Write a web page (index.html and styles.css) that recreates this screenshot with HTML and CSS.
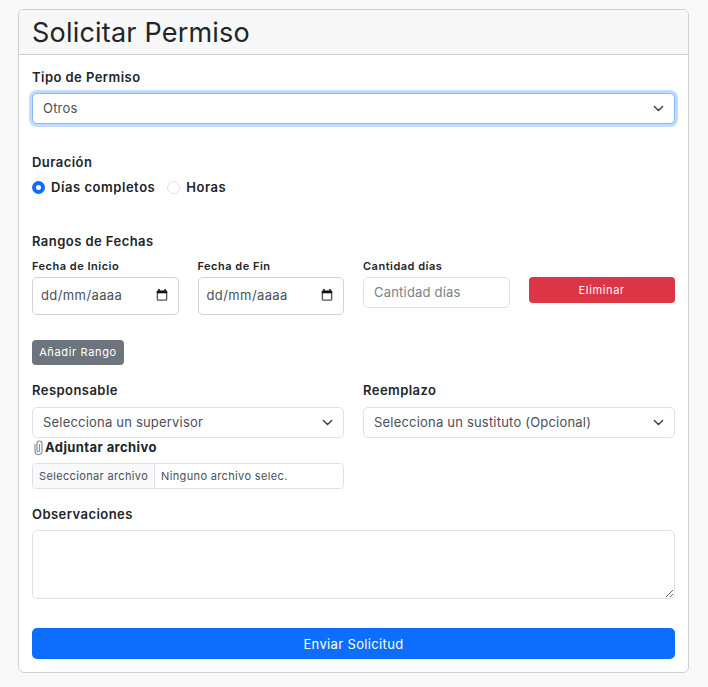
FILE: index.html
```html
<!DOCTYPE html>
<html lang="es">
<head>
    <meta charset="UTF-8">
    <meta name="viewport" content="width=device-width, initial-scale=1.0">
    <title>Solicitar Permiso</title>
    <link rel="stylesheet" href="styles.css">
</head>
<body>
    <div class="card">
        <div class="card-header">
            <h1>Solicitar Permiso</h1>
        </div>
        <form class="card-body">
            <div class="field-tipo">
                <label class="form-label" for="tipo">Tipo de Permiso</label>
                <select class="form-select is-focus" id="tipo">
                    <option>Otros</option>
                </select>
            </div>

            <div class="field-duracion">
                <div class="form-label">Duración</div>
                <div class="radio-row">
                    <label class="radio-item"><input type="radio" name="duracion" checked>Días completos</label>
                    <label class="radio-item"><input type="radio" name="duracion">Horas</label>
                </div>
            </div>

            <div class="field-rangos">
                <div class="form-label">Rangos de Fechas</div>
                <div class="range-row">
                    <div>
                        <div class="small-label">Fecha de Inicio</div>
                        <div class="date-input">
                            <span>dd/mm/aaaa</span>
                            <svg width="12" height="12" viewBox="0 0 14 14"><path d="M3.5 0v3M10.5 0v3" stroke="#111" stroke-width="1.8"/><rect x="1.6" y="2.6" width="10.8" height="10.4" rx="1" fill="none" stroke="#555" stroke-width="1.6"/><rect x="1" y="2" width="12" height="3" fill="#111"/></svg>
                        </div>
                    </div>
                    <div>
                        <div class="small-label">Fecha de Fin</div>
                        <div class="date-input">
                            <span>dd/mm/aaaa</span>
                            <svg width="12" height="12" viewBox="0 0 14 14"><path d="M3.5 0v3M10.5 0v3" stroke="#111" stroke-width="1.8"/><rect x="1.6" y="2.6" width="10.8" height="10.4" rx="1" fill="none" stroke="#555" stroke-width="1.6"/><rect x="1" y="2" width="12" height="3" fill="#111"/></svg>
                        </div>
                    </div>
                    <div>
                        <div class="small-label">Cantidad días</div>
                        <input class="form-control" type="text" placeholder="Cantidad días">
                    </div>
                    <div class="range-action">
                        <button class="btn btn-danger" type="button">Eliminar</button>
                    </div>
                </div>
                <button class="btn btn-secondary" type="button">Añadir Rango</button>
            </div>

            <div class="people-row">
                <div>
                    <label class="form-label" for="responsable">Responsable</label>
                    <select class="form-select" id="responsable">
                        <option>Selecciona un supervisor</option>
                    </select>
                </div>
                <div>
                    <label class="form-label" for="reemplazo">Reemplazo</label>
                    <select class="form-select" id="reemplazo">
                        <option>Selecciona un sustituto (Opcional)</option>
                    </select>
                </div>
            </div>

            <div class="field-adjunto">
                <div class="attach-label">
                    <svg width="13" height="15" viewBox="0 0 13 15"><path d="M3 4v7a3.5 3.5 0 0 0 7 0V3.5a2.5 2.5 0 0 0-5 0v7a1 1 0 0 0 2.5 0V4" fill="none" stroke="#8090a0" stroke-width="1.2"/></svg>
                    Adjuntar archivo
                </div>
                <div class="file-input">
                    <span class="file-button">Seleccionar archivo</span>
                    <span class="file-name">Ninguno archivo selec.</span>
                </div>
            </div>

            <div class="field-obs">
                <label class="form-label" for="obs">Observaciones</label>
                <textarea class="form-control obs-text" id="obs"></textarea>
            </div>

            <button class="btn btn-primary" type="button">Enviar Solicitud</button>
        </form>
    </div>
</body>
</html>
```

FILE: styles.css
```css
* {
    box-sizing: border-box;
}

body {
    margin: 0;
    padding: 9px 19px 14px 18px;
    background-color: #f8f8f8;
    color: #212529;
    font-family: "Inter", "Open Sans", sans-serif;
}

.card {
    background-color: #fff;
    border: 1px solid #cfcfcf;
    border-radius: 6px;
    overflow: hidden;
}

.card-header {
    height: 45px;
    padding: 0 13px;
    background-color: #f7f7f7;
    border-bottom: 1px solid #cfcfcf;
    display: flex;
    align-items: center;
}

.card-header h1 {
    margin: 0;
    font-size: 27px;
    font-weight: 400;
    letter-spacing: 0.2px;
}

.card-body {
    padding: 14px 13px 13px;
}

.form-label {
    display: block;
    height: 16px;
    margin-bottom: 8px;
    font-size: 13px;
    line-height: 16px;
    font-weight: 600;
    letter-spacing: 0.45px;
}

.small-label {
    height: 14px;
    margin-bottom: 4px;
    font-size: 11px;
    line-height: 14px;
    font-weight: 600;
    letter-spacing: 0.5px;
}

.form-select,
.form-control {
    display: block;
    width: 100%;
    font-family: inherit;
    font-size: 13px;
    letter-spacing: 0.2px;
    color: #495057;
    background-color: #fff;
    border: 1px solid #dee2e6;
    border-radius: 5px;
}

.form-select {
    height: 31px;
    padding: 0 30px 2px 10px;
    appearance: none;
    background-image: url("data:image/svg+xml,%3csvg xmlns='http://www.w3.org/2000/svg' viewBox='0 0 16 16'%3e%3cpath fill='none' stroke='%23343a40' stroke-linecap='round' stroke-linejoin='round' stroke-width='2' d='m2 5 6 6 6-6'/%3e%3c/svg%3e");
    background-repeat: no-repeat;
    background-position: right 10px center;
    background-size: 11px 11px;
}

.form-select.is-focus {
    border-color: #86b7fe;
    box-shadow: 0 0 0 3px rgba(13, 110, 253, 0.25);
}

.form-control {
    height: 31px;
    padding: 0 10px 2px;
}

.form-control::placeholder {
    color: #7b8187;
}

.field-duracion {
    margin-top: 30px;
}

.radio-row {
    display: flex;
    gap: 12px;
    margin-top: 9px;
    height: 16px;
}

.radio-item {
    display: flex;
    align-items: center;
    gap: 6px;
    font-size: 13px;
    font-weight: 600;
    letter-spacing: 0.55px;
}

.radio-item input {
    appearance: none;
    width: 13px;
    height: 13px;
    margin: 0;
    border: 1px solid #dee2e6;
    border-radius: 50%;
    background-color: #fff;
}

.radio-item input:checked {
    border: 4px solid #0d6efd;
}

.field-rangos {
    margin-top: 38px;
}

.field-rangos .form-label {
    margin-bottom: 10px;
}

.range-row {
    display: grid;
    grid-template-columns: repeat(4, 1fr);
    gap: 19px;
    align-items: start;
}

.range-action {
    padding-top: 18px;
}

.date-input {
    height: 38px;
    padding: 0 10px 2px 8px;
    border: 1px solid #ced4da;
    border-radius: 5px;
    display: flex;
    align-items: center;
    justify-content: space-between;
    font-size: 13px;
    letter-spacing: 0.4px;
    color: #495057;
}

.btn {
    display: block;
    border: none;
    border-radius: 4px;
    color: #fff;
    font-family: inherit;
    font-size: 11px;
    letter-spacing: 0.65px;
}

.btn-danger {
    width: 100%;
    height: 26px;
    background-color: #dc3545;
}

.btn-secondary {
    height: 25px;
    width: 92px;
    margin-top: 25px;
    padding: 0 0 2px;
    background-color: #6c757d;
}

.btn-primary {
    width: 100%;
    height: 31px;
    margin-top: 29px;
    font-size: 13px;
    letter-spacing: 0.35px;
    border-radius: 5px;
    background-color: #0d6efd;
}

.people-row {
    display: grid;
    grid-template-columns: repeat(2, 1fr);
    gap: 19px;
    margin-top: 17px;
}

.people-row .form-label {
    margin-bottom: 9px;
}

.field-adjunto {
    margin-top: 1px;
}

.attach-label {
    height: 16px;
    margin-bottom: 8px;
    display: flex;
    align-items: center;
    font-size: 13px;
    line-height: 16px;
    font-weight: 700;
    letter-spacing: 0.4px;
}

.file-input {
    width: 312px;
    height: 26px;
    border: 1px solid #dee2e6;
    border-radius: 4px;
    display: flex;
    align-items: center;
    font-size: 11px;
    letter-spacing: 0.35px;
    color: #495057;
    overflow: hidden;
}

.file-button {
    height: 100%;
    padding: 0 6px;
    display: flex;
    align-items: center;
    background-color: #f8f9fa;
    border-right: 1px solid #dee2e6;
}

.file-name {
    padding-left: 6px;
}

.field-obs {
    margin-top: 17px;
}

.obs-text {
    height: 69px;
    padding: 4px 10px;
}
```
